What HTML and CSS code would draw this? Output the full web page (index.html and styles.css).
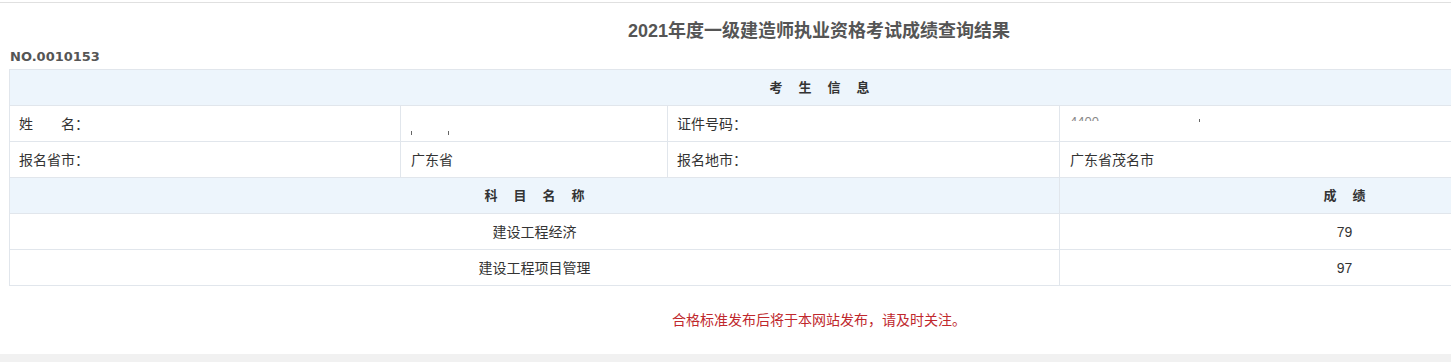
FILE: index.html
```html
<!DOCTYPE html>
<html lang="zh-CN">
<head>
<meta charset="utf-8">
<title>成绩查询结果</title>
<link rel="stylesheet" href="styles.css">
</head>
<body>
<div class="topbar"></div>
<div class="page">
  <h1 class="title">2021年度一级建造师执业资格考试成绩查询结果</h1>
  <div class="no">NO.0010153</div>
  <table class="result">
    <colgroup>
      <col class="c1"><col class="c2"><col class="c3"><col class="c4">
    </colgroup>
    <tr class="head"><th colspan="4"><span class="spaced">考生信息</span></th></tr>
    <tr>
      <td class="label">姓&emsp;&emsp;名：</td>
      <td class="val"><span class="redact"><i class="tick"></i><i class="gap"></i><i class="tick"></i></span></td>
      <td class="label">证件号码：</td>
      <td class="val top"><span class="masked">4400</span><i class="gap2"></i><i class="dot"></i></td>
    </tr>
    <tr>
      <td class="label">报名省市：</td>
      <td class="val">广东省</td>
      <td class="label">报名地市：</td>
      <td class="val">广东省茂名市</td>
    </tr>
    <tr class="head">
      <th colspan="3"><span class="spaced">科目名称</span></th>
      <th><span class="spaced">成绩</span></th>
    </tr>
    <tr>
      <td colspan="3" class="center">建设工程经济</td>
      <td class="center">79</td>
    </tr>
    <tr>
      <td colspan="3" class="center">建设工程项目管理</td>
      <td class="center">97</td>
    </tr>
  </table>
  <p class="notice">合格标准发布后将于本网站发布，请及时关注。</p>
</div>
<div class="footband"></div>
</body>
</html>
```

FILE: styles.css
```css
html, body {
  margin: 0;
  padding: 0;
  background: #fff;
  overflow: hidden;
  height: 362px;
  position: relative;
}

body {
  font-family: "Liberation Sans", "Noto Sans CJK SC", sans-serif;
  color: #333;
}

.topbar {
  height: 2px;
  border-bottom: 1px solid #e0e0e0;
}

.page {
  width: 1620px;
  margin-left: 9px;
}

.title {
  margin: 16px 0 0;
  text-align: center;
  font-size: 18px;
  font-weight: bold;
  line-height: 24px;
  color: #555;
}

.no {
  margin: 6px 0 4px;
  padding-left: 1px;
  font-family: "DejaVu Sans", sans-serif;
  font-weight: bold;
  font-size: 13px;
  line-height: 16px;
  color: #555;
}

.result {
  width: 1620px;
  border-collapse: collapse;
  table-layout: fixed;
  font-size: 14px;
}

.c1 { width: 391px; }
.c2 { width: 267px; }
.c3 { width: 392px; }
.c4 { width: 570px; }

.result tr {
  height: 36px;
}

.result th,
.result td {
  border: 1px solid #e1e6ec;
  padding: 0;
  line-height: 20px;
  vertical-align: middle;
}

.head th {
  background: #edf5fc;
  font-size: 13px;
  font-weight: bold;
  color: #333;
  text-align: center;
}

.spaced {
  letter-spacing: 16px;
  padding-left: 16px;
}

.label {
  padding-left: 9px !important;
  color: #333;
}

.val {
  padding-left: 10px !important;
  color: #333;
}

.val.top {
  vertical-align: top;
  padding-top: 9px !important;
}

.center {
  text-align: center;
}

.redact {
  display: inline-flex;
  align-items: flex-end;
  height: 20px;
  padding-top: 8px;
}

.tick {
  display: inline-block;
  width: 1px;
  height: 4px;
  background: #666;
}

.gap { display: inline-block; width: 36px; }
.gap2 { display: inline-block; width: 100px; }

.masked {
  position: relative;
  display: inline-block;
  font-size: 13px;
  line-height: 14px;
  color: #888;
  vertical-align: top;
}

.masked::after {
  content: "";
  position: absolute;
  left: -2px;
  right: -2px;
  top: 6px;
  bottom: -2px;
  background: #fff;
}

.dot {
  display: inline-block;
  width: 1px;
  height: 3px;
  background: #666;
  vertical-align: top;
  margin-top: 4px;
}

.notice {
  margin: 24px 0 0;
  text-align: center;
  font-size: 14px;
  line-height: 20px;
  color: #c0282d;
}

.footband {
  position: absolute;
  left: 0;
  right: 0;
  top: 354px;
  height: 8px;
  background: #f1f1f1;
}
```
